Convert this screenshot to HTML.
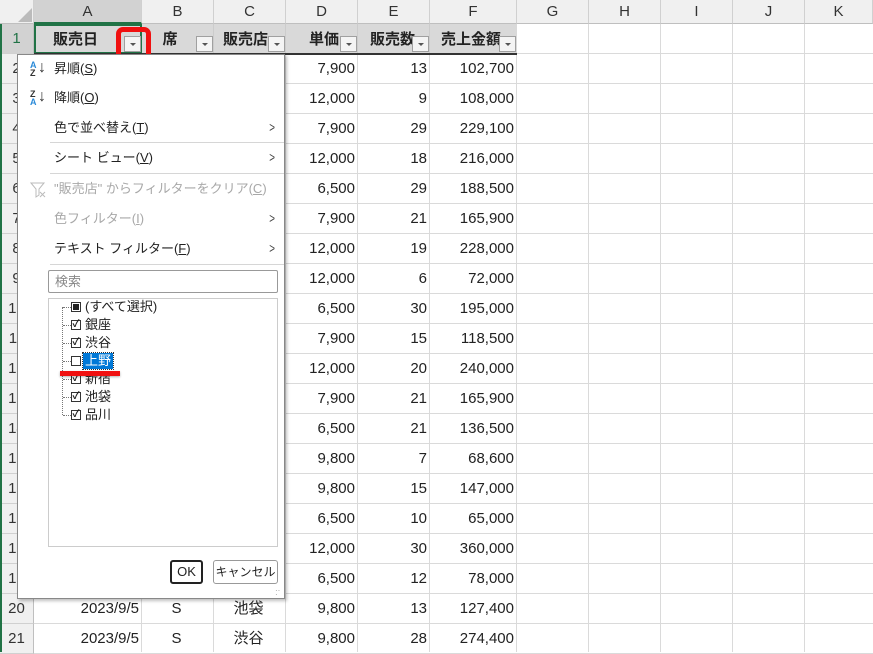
<!DOCTYPE html><html><head><meta charset="utf-8"><style>
*{margin:0;padding:0;box-sizing:border-box}
body{width:873px;height:652px;overflow:hidden;background:#fff;font-family:"Liberation Sans","Noto Sans CJK JP",sans-serif;font-size:14px;color:#222;position:relative}
.a{position:absolute}
.ch{position:absolute;top:0;height:24px;background:#f0f0f0;border-right:1px solid #d0d0d0;border-bottom:1px solid #bfbfbf;text-align:center;line-height:24px;font-size:15px;color:#333}
.rh{position:absolute;left:0;width:34px;height:30px;background:#f0f0f0;border-bottom:1px solid #d0d0d0;border-right:1px solid #bfbfbf;text-align:center;line-height:30px;font-size:15px;color:#333}
.hl{position:absolute;left:34px;width:839px;height:1px;background:#dadada}
.vl{position:absolute;top:24px;width:1px;height:628px;background:#dadada}
.c{position:absolute;height:30px;line-height:30px;font-size:15px;text-align:right;padding-right:3px}
.hd{position:absolute;top:24px;height:30px;background:#d9d9d9;font-weight:bold;font-size:15px;line-height:32px;text-align:center}
.dd{position:absolute;width:17px;height:16px;border:1px solid #a0a0a0;background:#f4f4f4}
.dd:after{content:"";position:absolute;left:5px;top:6px;border-left:3px solid transparent;border-right:3px solid transparent;border-top:3px solid #555}
.mi{position:absolute;left:54px;font-size:13px;line-height:16px}
.gr{color:#a8a8a8}
.sep{position:absolute;left:50px;width:234px;height:1px;background:#d6d6d6}
.arr{position:absolute;left:268px;font-size:14px;color:#444;transform:scaleX(.7)}
.li{position:absolute;left:85px;font-size:13px;line-height:16px}
.cb{position:absolute;left:71px;width:10px;height:10px;border:1px solid #333;background:#fff;font-size:10px;line-height:8px;text-align:center;font-weight:bold}
</style></head><body>
<div class="ch" style="left:0;width:34px;background:#f0f0f0"></div>
<div class="a" style="left:18px;top:8px;border-left:14px solid transparent;border-bottom:14px solid #bbb"></div>
<div class="ch" style="left:34px;width:108px;background:#d2d2d2;border-bottom:2px solid #217346">A</div>
<div class="ch" style="left:142px;width:72px">B</div>
<div class="ch" style="left:214px;width:72px">C</div>
<div class="ch" style="left:286px;width:72px">D</div>
<div class="ch" style="left:358px;width:72px">E</div>
<div class="ch" style="left:430px;width:87px">F</div>
<div class="ch" style="left:517px;width:72px">G</div>
<div class="ch" style="left:589px;width:72px">H</div>
<div class="ch" style="left:661px;width:72px">I</div>
<div class="ch" style="left:733px;width:72px">J</div>
<div class="ch" style="left:805px;width:68px">K</div>
<div class="vl" style="left:141px"></div><div class="vl" style="left:213px"></div><div class="vl" style="left:285px"></div><div class="vl" style="left:357px"></div><div class="vl" style="left:429px"></div><div class="vl" style="left:516px"></div><div class="vl" style="left:588px"></div><div class="vl" style="left:660px"></div><div class="vl" style="left:732px"></div><div class="vl" style="left:804px"></div>
<div id="rows"></div>
<div class="hd" style="left:34px;width:108px;border:2px solid #217346;padding-right:25px;line-height:28px">販売日</div>
<div class="hd" style="left:142px;width:72px;border-right:1px solid #ccc;padding-right:15px">席</div>
<div class="hd" style="left:214px;width:72px;border-right:1px solid #ccc;padding-right:8px">販売店</div>
<div class="hd" style="left:286px;width:72px;border-right:1px solid #ccc;text-align:right;padding-right:18px">単価</div>
<div class="hd" style="left:358px;width:72px;border-right:1px solid #ccc;text-align:right;padding-right:14px">販売数</div>
<div class="hd" style="left:430px;width:87px;text-align:right;padding-right:16px">売上金額</div>
<div class="a" style="left:34px;top:53px;width:483px;height:2px;background:#333"></div>
<div class="dd" style="left:124px;top:36px"></div>
<div class="dd" style="left:196px;top:36px"></div>
<div class="dd" style="left:268px;top:36px"></div>
<div class="dd" style="left:340px;top:36px"></div>
<div class="dd" style="left:412px;top:36px"></div>
<div class="dd" style="left:499px;top:36px"></div>
<div class="a" style="left:116px;top:27px;width:35px;height:34px;border:5px solid #f01010;border-radius:7px"></div>
<div class="a" style="left:0;top:24px;width:2px;height:628px;background:#217346"></div>
<script>
var d=[[],["7,900",13,"102,700"],["12,000",9,"108,000"],["7,900",29,"229,100"],["12,000",18,"216,000"],["6,500",29,"188,500"],["7,900",21,"165,900"],["12,000",19,"228,000"],["12,000",6,"72,000"],["6,500",30,"195,000"],["7,900",15,"118,500"],["12,000",20,"240,000"],["7,900",21,"165,900"],["6,500",21,"136,500"],["9,800",7,"68,600"],["9,800",15,"147,000"],["6,500",10,"65,000"],["12,000",30,"360,000"],["6,500",12,"78,000"],["9,800",13,"127,400"],["9,800",28,"274,400"]];
var h="";
for(var r=1;r<=21;r++){var y=24+(r-1)*30;
h+='<div class="rh" style="top:'+y+'px;'+(r==1?'background:#d2d2d2;color:#217346':'')+'">'+r+'</div>';
h+='<div class="hl" style="top:'+(y+29)+'px"></div>';
if(r>1){var v=d[r-1];
h+='<div class="c" style="left:286px;width:72px;top:'+y+'px">'+v[0]+'</div>';
h+='<div class="c" style="left:358px;width:72px;top:'+y+'px">'+v[1]+'</div>';
h+='<div class="c" style="left:430px;width:87px;top:'+y+'px">'+v[2]+'</div>';}
if(r>=20){h+='<div class="c" style="left:34px;width:108px;top:'+y+'px">2023/9/5</div><div class="c" style="left:142px;width:72px;top:'+y+'px;text-align:center">S</div><div class="c" style="left:214px;width:72px;top:'+y+'px;text-align:center">'+(r==20?'池袋':'渋谷')+'</div>';}
}
document.getElementById('rows').innerHTML=h;
</script>
<div class="a" style="left:17px;top:54px;width:268px;height:545px;background:#fff;border:1px solid #888;box-shadow:2px 2px 3px rgba(0,0,0,.25)"></div>
<div class="a" style="left:30px;top:61px;font-size:9px;line-height:8px;font-weight:bold;color:#2a8ad8">A<br><span style="color:#333">Z</span></div>
<div class="a" style="left:38px;top:59px;font-size:16px;color:#333">↓</div>
<div class="mi" style="top:61px">昇順(<u>S</u>)</div>
<div class="a" style="left:30px;top:90px;font-size:9px;line-height:8px;font-weight:bold;color:#333">Z<br><span style="color:#2a8ad8">A</span></div>
<div class="a" style="left:38px;top:88px;font-size:16px;color:#333">↓</div>
<div class="mi" style="top:90px">降順(<u>O</u>)</div>
<div class="mi" style="top:120px">色で並べ替え(<u>T</u>)</div><div class="arr" style="top:119px">&gt;</div>
<div class="sep" style="top:142px"></div>
<div class="mi" style="top:150px">シート ビュー(<u>V</u>)</div><div class="arr" style="top:149px">&gt;</div>
<div class="sep" style="top:173px"></div>
<svg class="a" style="left:30px;top:182px" width="16" height="16"><path d="M1 1h13l-5 6v6l-3 2v-8z" fill="none" stroke="#bbb"/><path d="M10 10l5 5M15 10l-5 5" stroke="#bbb"/></svg>
<div class="mi gr" style="top:181px">"販売店" からフィルターをクリア(<u>C</u>)</div>
<div class="mi gr" style="top:211px">色フィルター(<u>I</u>)</div><div class="arr gr" style="top:210px">&gt;</div>
<div class="mi" style="top:241px">テキスト フィルター(<u>F</u>)</div><div class="arr" style="top:240px">&gt;</div>
<div class="sep" style="top:264px"></div>
<div class="a" style="left:48px;top:270px;width:230px;height:23px;border:1px solid #999;border-radius:2px;font-size:13px;color:#888;line-height:21px;padding-left:6px">検索</div>
<div class="a" style="left:48px;top:298px;width:230px;height:249px;border:1px solid #ccc"></div>
<div class="a" style="left:62px;top:307px;width:1px;height:108px;border-left:1px dotted #777"></div>
<div id="li"></div>
<script>
var L=["(すべて選択)","銀座","渋谷","上野","新宿","池袋","品川"],s="";
for(var i=0;i<7;i++){var y=307+i*18;
s+='<div class="a" style="left:63px;top:'+y+'px;width:8px;border-top:1px dotted #777"></div>';
s+='<div class="cb" style="top:'+(y-5)+'px">'+(i==0?'<div style="width:6px;height:6px;background:#222;margin:1px"></div>':(i==3?'':'✓'))+'</div>';
s+='<div class="li" style="top:'+(y-8)+'px;'+(i==3?'background:#0078d7;color:#fff;padding:0 2px;left:83px;outline:1px dotted #333':'')+'">'+L[i]+'</div>';}
document.getElementById('li').innerHTML=s;
</script>
<div class="a" style="left:60px;top:371px;width:60px;height:5px;background:#f01010;box-shadow:0 1px 2px rgba(0,0,0,.3)"></div>
<div class="a" style="left:170px;top:560px;width:33px;height:24px;border:2px solid #222;border-radius:3px;text-align:center;line-height:20px;font-size:13px">OK</div>
<div class="a" style="left:213px;top:560px;width:65px;height:24px;border:1px solid #999;border-radius:3px;text-align:center;line-height:22px;font-size:12px">キャンセル</div>
<div class="a" style="left:275px;top:589px;font-size:8px;color:#999;line-height:4px">··<br>·</div>
</body></html>
